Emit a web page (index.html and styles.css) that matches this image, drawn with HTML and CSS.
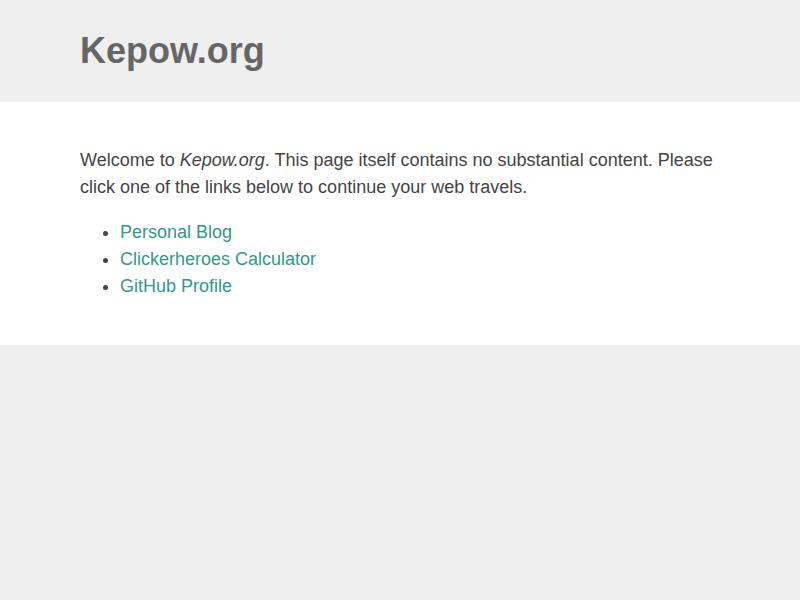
FILE: index.html
```html
<!DOCTYPE html>
<html lang="en">
<head>
    <meta charset="UTF-8">
    <meta name="viewport" content="width=device-width, initial-scale=1.0">
    <title>Kepow.org</title>
    <link rel="stylesheet" href="styles.css">
</head>
<body>
    <header class="site-header">
        <div class="wrap">
            <h1>Kepow.org</h1>
        </div>
    </header>
    <main class="site-main">
        <div class="wrap">
            <p>Welcome to <em>Kepow.org</em>. This page itself contains no substantial content. Please click one of the links below to continue your web travels.</p>
            <ul>
                <li><a href="#">Personal Blog</a></li>
                <li><a href="#">Clickerheroes Calculator</a></li>
                <li><a href="#">GitHub Profile</a></li>
            </ul>
        </div>
    </main>
</body>
</html>
```

FILE: styles.css
```css
body {
    font-family: "Liberation Sans", Arial, sans-serif;
    background-color: #efefef;
    color: #444;
    font-size: 18px;
    line-height: 1.5;
    margin: 0;
}
.wrap {
    width: 640px;
    margin: 0 auto;
}
.site-header {
    padding: 29px 0 30px;
}
h1 {
    margin: 0;
    font-size: 36px;
    line-height: 1.2;
    color: #666;
}
.site-main {
    background: #fff;
    padding: 27px 0;
}
p {
    margin: 18px 0;
}
ul {
    margin: 18px 0;
    padding-left: 40px;
}
a {
    color: #2e9a88;
    text-decoration: none;
}
```
